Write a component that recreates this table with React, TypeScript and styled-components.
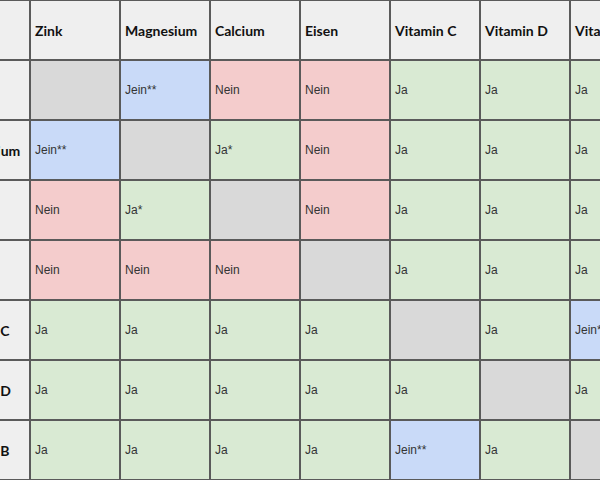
import React from "react";
import styled, { createGlobalStyle } from "styled-components";

const GlobalStyle = createGlobalStyle`
  html, body {
    margin: 0;
    padding: 0;
    background: #ffffff;
    overflow: hidden;
  }
  body {
    width: 600px;
    height: 480px;
  }
`;

type Tone = "head" | "none" | "yes" | "no" | "maybe";

const tones: Record<Tone, string> = {
  head: "#efefef",
  none: "#d9d9d9",
  yes: "#d9ead3",
  no: "#f4cccc",
  maybe: "#c9daf8",
};

const Frame = styled.div`
  width: 600px;
  height: 480px;
  overflow: hidden;
`;

const Table = styled.div`
  display: grid;
  grid-template-columns: repeat(8, 88px);
  grid-auto-rows: 58px;
  gap: 2px;
  padding: 1px 2px 2px 0;
  margin-left: -59px;
  width: max-content;
  background: #5a5a5a;
`;

const Cell = styled.div<{ $tone: Tone }>`
  display: flex;
  align-items: center;
  padding-left: 4px;
  background: ${(p) => tones[p.$tone]};
  color: #333333;
  font-family: "Liberation Sans", Arial, sans-serif;
  font-size: 12px;
  white-space: nowrap;
  overflow: hidden;
`;

const HeadCell = styled(Cell)`
  color: #111111;
  font-family: Lato, "Open Sans", sans-serif;
  font-size: 14px;
  font-weight: 700;
`;

const LabelCell = styled(HeadCell)`
  padding-left: 7px;
`;

const names = ["Zink", "Magnesium", "Calcium", "Eisen", "Vitamin C", "Vitamin D", "Vitamin B"];

const G = "none";
const data: [Tone, string][][] = [
  [[G, ""], ["maybe", "Jein**"], ["no", "Nein"], ["no", "Nein"], ["yes", "Ja"], ["yes", "Ja"], ["yes", "Ja"]],
  [["maybe", "Jein**"], [G, ""], ["yes", "Ja*"], ["no", "Nein"], ["yes", "Ja"], ["yes", "Ja"], ["yes", "Ja"]],
  [["no", "Nein"], ["yes", "Ja*"], [G, ""], ["no", "Nein"], ["yes", "Ja"], ["yes", "Ja"], ["yes", "Ja"]],
  [["no", "Nein"], ["no", "Nein"], ["no", "Nein"], [G, ""], ["yes", "Ja"], ["yes", "Ja"], ["yes", "Ja"]],
  [["yes", "Ja"], ["yes", "Ja"], ["yes", "Ja"], ["yes", "Ja"], [G, ""], ["yes", "Ja"], ["maybe", "Jein**"]],
  [["yes", "Ja"], ["yes", "Ja"], ["yes", "Ja"], ["yes", "Ja"], ["yes", "Ja"], [G, ""], ["yes", "Ja"]],
  [["yes", "Ja"], ["yes", "Ja"], ["yes", "Ja"], ["yes", "Ja"], ["maybe", "Jein**"], ["yes", "Ja"], [G, ""]],
];

export default function App() {
  return (
    <Frame>
      <GlobalStyle />
      <Table>
        <HeadCell $tone="head" />
        {names.map((n) => (
          <HeadCell key={n} $tone="head">
            {n}
          </HeadCell>
        ))}
        {data.map((row, r) => (
          <React.Fragment key={r}>
            <LabelCell $tone="head">{names[r]}</LabelCell>
            {row.map(([tone, text], c) => (
              <Cell key={c} $tone={tone}>
                {text}
              </Cell>
            ))}
          </React.Fragment>
        ))}
      </Table>
    </Frame>
  );
}
